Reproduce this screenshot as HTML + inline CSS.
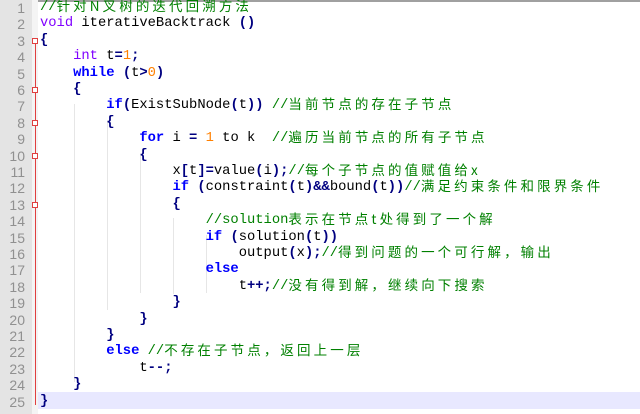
<!DOCTYPE html>
<html><head><meta charset="utf-8"><style>
body{margin:0;width:640px;height:414px;overflow:hidden;background:#fff;position:relative;font-family:"Liberation Mono",monospace;}
#top{position:absolute;left:0;top:0;width:640px;height:2px;background:#a0a0a0}
#gut{position:absolute;left:0;top:0;width:32px;height:414px;background:#e4e4e4}
#fold{position:absolute;left:32px;top:0;width:6px;height:414px;background:#f4f4f4}
.ln{position:absolute;left:0;width:25px;text-align:right;font-family:"Liberation Sans",sans-serif;font-size:14px;color:#909090;height:16px;line-height:16px}
.l{position:absolute;left:40px;font-size:13.8px;height:16px;line-height:16px;white-space:pre;color:#000}
.k{color:#0000ff;font-weight:bold}
.t{color:#8000ff}
.o{color:#000080;font-weight:bold}
.n{color:#ff8000}
.c{color:#008000}
.z{font-family:"Noto Sans CJK SC",sans-serif;font-size:13.5px;letter-spacing:3.1px;line-height:0;position:relative;top:1px}
.g{position:absolute;width:1px;background:#e6e6e6}
#hl{position:absolute;left:38px;top:392px;width:602px;height:17px;background:#e8e8ff}
#red{position:absolute;left:35px;top:41px;width:1px;height:364px;background:#e04040}
.fb{position:absolute;left:32px;width:6px;height:6px;border:1px solid #e04040;background:#fff;box-sizing:border-box}
</style></head><body>
<div id="top"></div><div id="gut"></div><div id="fold"></div><div id="hl"></div><div id="red"></div>
<div class="fb" style="top:38px"></div><div class="fb" style="top:87px"></div><div class="fb" style="top:120px"></div><div class="fb" style="top:153px"></div><div class="fb" style="top:202px"></div>
<div class="g" style="left:74px;top:104px;height:278px"></div>
<div class="g" style="left:107px;top:120px;height:190px"></div>
<div class="g" style="left:140px;top:153px;height:140px"></div>
<div class="g" style="left:173px;top:218px;height:76px"></div>
<div class="g" style="left:206px;top:235px;height:58px"></div>

<div class="ln" style="top:0px">1</div><div class="ln" style="top:16.4px">2</div><div class="ln" style="top:32.8px">3</div><div class="ln" style="top:49.2px">4</div><div class="ln" style="top:65.6px">5</div><div class="ln" style="top:82px">6</div><div class="ln" style="top:98.4px">7</div><div class="ln" style="top:114.8px">8</div><div class="ln" style="top:131.2px">9</div><div class="ln" style="top:147.6px">10</div><div class="ln" style="top:164px">11</div><div class="ln" style="top:180.4px">12</div><div class="ln" style="top:196.8px">13</div><div class="ln" style="top:213.2px">14</div><div class="ln" style="top:229.6px">15</div><div class="ln" style="top:246px">16</div><div class="ln" style="top:262.4px">17</div><div class="ln" style="top:278.8px">18</div><div class="ln" style="top:295.2px">19</div><div class="ln" style="top:311.6px">20</div><div class="ln" style="top:328px">21</div><div class="ln" style="top:344.4px">22</div><div class="ln" style="top:360.8px">23</div><div class="ln" style="top:377.2px">24</div><div class="ln" style="top:393.6px">25</div>

<div class="l" style="top:0px"><span class="c">//<span class="z">针对N叉树的迭代回溯方法</span></span></div>
<div class="l" style="top:16.4px"><span class="t">void</span> iterativeBacktrack <span class="o">()</span></div>
<div class="l" style="top:32.8px"><span class="o">{</span></div>
<div class="l" style="top:49.2px">    <span class="t">int</span> t<span class="o">=</span><span class="n">1</span><span class="o">;</span></div>
<div class="l" style="top:65.6px">    <span class="k">while</span> <span class="o">(</span>t<span class="o">&gt;</span><span class="n">0</span><span class="o">)</span></div>
<div class="l" style="top:82px">    <span class="o">{</span></div>
<div class="l" style="top:98.4px">        <span class="k">if</span><span class="o">(</span>ExistSubNode<span class="o">(</span>t<span class="o">))</span> <span class="c">//<span class="z">当前节点的存在子节点</span></span></div>
<div class="l" style="top:114.8px">        <span class="o">{</span></div>
<div class="l" style="top:131.2px">            <span class="k">for</span> i <span class="o">=</span> <span class="n">1</span> to k  <span class="c">//<span class="z">遍历当前节点的所有子节点</span></span></div>
<div class="l" style="top:147.6px">            <span class="o">{</span></div>
<div class="l" style="top:164px">                x<span class="o">[</span>t<span class="o">]=</span>value<span class="o">(</span>i<span class="o">);</span><span class="c">//<span class="z">每个子节点的值赋值给x</span></span></div>
<div class="l" style="top:180.4px">                <span class="k">if</span> <span class="o">(</span>constraint<span class="o">(</span>t<span class="o">)&amp;&amp;</span>bound<span class="o">(</span>t<span class="o">))</span><span class="c">//<span class="z">满足约束条件和限界条件</span></span></div>
<div class="l" style="top:196.8px">                <span class="o">{</span></div>
<div class="l" style="top:213.2px">                    <span class="c">//solution<span class="z">表示在节点t处得到了一个解</span></span></div>
<div class="l" style="top:229.6px">                    <span class="k">if</span> <span class="o">(</span>solution<span class="o">(</span>t<span class="o">))</span></div>
<div class="l" style="top:246px">                        output<span class="o">(</span>x<span class="o">);</span><span class="c">//<span class="z">得到问题的一个可行解，输出</span></span></div>
<div class="l" style="top:262.4px">                    <span class="k">else</span></div>
<div class="l" style="top:278.8px">                        t<span class="o">++;</span><span class="c">//<span class="z">没有得到解，继续向下搜索</span></span></div>
<div class="l" style="top:295.2px">                <span class="o">}</span></div>
<div class="l" style="top:311.6px">            <span class="o">}</span></div>
<div class="l" style="top:328px">        <span class="o">}</span></div>
<div class="l" style="top:344.4px">        <span class="k">else</span> <span class="c">//<span class="z">不存在子节点，返回上一层</span></span></div>
<div class="l" style="top:360.8px">            t<span class="o">--;</span></div>
<div class="l" style="top:377.2px">    <span class="o">}</span></div>
<div class="l" style="top:393.6px"><span class="o">}</span></div>
</body></html>
